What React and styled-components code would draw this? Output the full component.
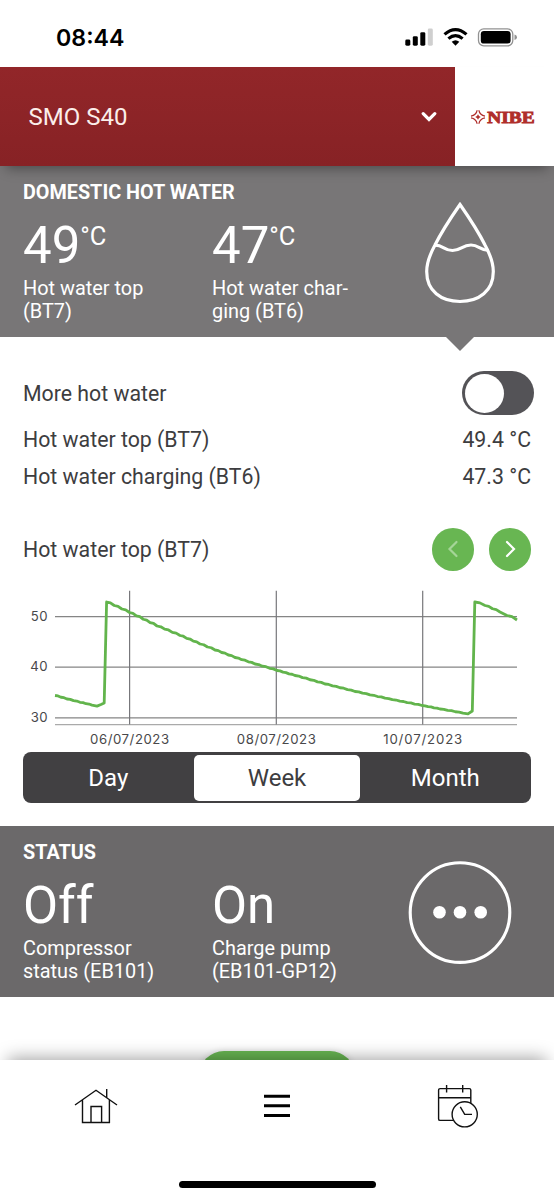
import { useState } from "react";
import styled, { createGlobalStyle } from "styled-components";

const GlobalStyle = createGlobalStyle`
    * { box-sizing: border-box; }
    body {
        margin: 0;
        background: #fff;
        font-family: Roboto, "Liberation Sans", sans-serif;
        color: #3d3d3f;
    }
    button { font-family: inherit; }
`;

const Screen = styled.div`
    width: 554px;
    height: 1200px;
    display: flex;
    flex-direction: column;
    background: #fff;
    overflow: hidden;
`;

const StatusBar = styled.div`
    height: 67px;
    flex-shrink: 0;
    display: flex;
    align-items: center;
    justify-content: space-between;
    padding: 8px 37px 0 56px;
    .time {
        font-family: Inter, "Liberation Sans", sans-serif;
        font-size: 23.2px;
        font-weight: 600;
        line-height: 30px;
        color: #000;
    }
    svg { display: block; }
`;

const Header = styled.div`
    height: 99px;
    flex-shrink: 0;
    display: flex;
    position: relative;
    z-index: 1;
    box-shadow: 0 8px 12px -6px rgba(0, 0, 0, 0.4);
`;

const SystemPicker = styled.button`
    width: 454.5px;
    display: flex;
    align-items: center;
    justify-content: space-between;
    border: none;
    padding: 0 18px 0 28.5px;
    background: linear-gradient(to bottom, #922629, #872225);
    color: #fbeeea;
    font-size: 24px;
    cursor: pointer;
`;

const Brand = styled.div`
    flex: 1;
    display: flex;
    align-items: center;
    padding-left: 15px;
    background: #fff;
`;

const Card = styled.div`
    height: 171px;
    flex-shrink: 0;
    position: relative;
    padding: 14.6px 34px 0 23px;
    display: grid;
    grid-template-columns: 377px 120px;
    background: ${(props) => (props.$open ? "#787677" : "#6b696a")};
    color: #fff;
    &::after {
        content: "";
        display: ${(props) => (props.$open ? "block" : "none")};
        position: absolute;
        top: 100%;
        left: 446px;
        border: 14.5px solid transparent;
        border-top: 14px solid #787677;
        border-bottom: none;
    }
`;

const CardTitle = styled.h2`
    margin: 0 0 16px;
    font-size: 19.8px;
    font-weight: 700;
    line-height: 24px;
`;

const Values = styled.div`
    display: grid;
    grid-template-columns: 189px 188px;
`;

const Value = styled.div`
    display: flex;
    align-items: flex-start;
    height: 50px;
    font-size: 51px;
    line-height: 50px;
    sup {
        font-size: 25.5px;
        line-height: 30px;
    }
`;

const ValueLabel = styled.div`
    margin-top: 6px;
    font-size: 19.9px;
    line-height: 23.4px;
    white-space: pre-line;
`;

const CardIcon = styled.div`
    display: flex;
    justify-content: center;
    padding-top: 19px;
`;

const Details = styled.div`
    flex-shrink: 0;
    height: 489px;
    padding: 34px 23px 0 23px;
    font-size: 21.3px;
`;

const Row = styled.div`
    display: flex;
    align-items: center;
    justify-content: space-between;
    height: 36.8px;
`;

const SwitchRow = styled(Row)`
    height: 44px;
    margin: 0 -3px 6px 0;
`;

const Switch = styled.button`
    width: 72px;
    height: 44px;
    padding: 0 2.5px;
    display: flex;
    align-items: center;
    justify-content: ${(props) => (props.$on ? "flex-end" : "flex-start")};
    border: none;
    border-radius: 22px;
    background: ${(props) => (props.$on ? "#68b652" : "#545357")};
    cursor: pointer;
    span {
        width: 39px;
        height: 39px;
        border-radius: 50%;
        background: #fff;
    }
`;

const ChartHeader = styled(Row)`
    height: 43px;
    margin-top: 33.4px;
`;

const Arrows = styled.div`
    display: flex;
    gap: 14.5px;
`;

const RoundButton = styled.button`
    width: 42.5px;
    height: 42.5px;
    padding: 0;
    display: flex;
    align-items: center;
    justify-content: center;
    border: none;
    border-radius: 50%;
    background: #68b652;
    color: #fff;
    cursor: pointer;
    &:disabled { color: #a5d598; }
`;

const ChartSvg = styled.svg`
    display: block;
    margin-left: -23px;
    text {
        font-family: Inter, "Liberation Sans", sans-serif;
        font-size: 13.2px;
        fill: #48484a;
    }
`;

const Tabs = styled.div`
    height: 51px;
    padding: 2.5px;
    display: grid;
    grid-template-columns: 168.5px 166px 1fr;
    border-radius: 8px;
    background: #414042;
`;

const Tab = styled.button`
    border: none;
    border-radius: 5px;
    padding: 0;
    font-size: 24px;
    background: ${(props) => (props.$active ? "#fff" : "transparent")};
    color: ${(props) => (props.$active ? "#3d3d3f" : "#fff")};
    cursor: pointer;
    &:first-child { padding-right: 3px; }
    &:last-child { padding-left: 2px; }
`;

const Actions = styled.div`
    flex: 1;
    min-height: 0;
    display: flex;
    justify-content: center;
    padding-top: 54px;
`;

const GreenButton = styled.button`
    width: 156px;
    height: 50px;
    flex-shrink: 0;
    border: none;
    border-radius: 25px;
    background: #68b652;
    box-shadow: 0 0 6px rgba(0, 0, 0, 0.15);
`;

const BottomNav = styled.nav`
    height: 140px;
    flex-shrink: 0;
    position: relative;
    display: flex;
    flex-direction: column;
    align-items: center;
    justify-content: space-between;
    padding: 21px 6px 12px;
    background: #fff;
    box-shadow: 0 -10px 16px -8px rgba(0, 0, 0, 0.36);
`;

const NavItems = styled.div`
    width: 100%;
    display: grid;
    grid-template-columns: repeat(3, 1fr);
    justify-items: center;
    svg { overflow: visible; }
`;

const HomeIndicator = styled.div`
    width: 197px;
    height: 7px;
    border-radius: 4px;
    background: #000;
`;

const TREND = [
    [55, 124], [67, 127.5], [80, 130.8], [92, 133.6], [97, 134.6], [101, 133],
    [104.2, 131.5], [106.6, 30.5], [129.5, 41], [157, 54.5], [180, 64],
    [200, 72.5], [215, 78.5], [235, 86], [255, 92.5], [277, 99], [295, 104],
    [325, 112.5], [355, 120], [385, 126.7], [422, 134], [440, 137.5],
    [463, 141.6], [468, 142.4], [472.3, 139.5], [474.8, 30.5], [485, 34],
    [500, 40.5], [507, 44], [517, 48.5],
];

const buildTrend = () => {
    const out = [];
    TREND.forEach(([x, y], i) => {
        const next = TREND[i + 1];
        out.push(`${x},${y}`);
        if (!next || next[0] - x < 9) return;
        const steps = Math.round((next[0] - x) / 7);
        const dx = (next[0] - x) / steps;
        const dy = (next[1] - y) / steps;
        for (let s = 0; s < steps; s++) {
            out.push(`${x + dx * (s + 0.5)},${y + dy * (s + 0.25)}`);
            if (s < steps - 1) out.push(`${x + dx * (s + 1)},${y + dy * (s + 1)}`);
        }
    });
    return out.join(" ");
};

const Chart = () => (
    <ChartSvg width="554" height="181.5" viewBox="0 0 554 181.5">
        {[[50, 45.6], [40, 96.2], [30, 146.8]].map(([label, y]) => (
            <g key={label}>
                <line x1="55" x2="517" y1={y} y2={y} stroke="#858585" strokeWidth="1.2" />
                <text x="47.8" y={y + 4.2} textAnchor="end" letterSpacing="0.3">{label}</text>
            </g>
        ))}
        <line x1="55" x2="517" y1="153.6" y2="153.6" stroke="#aaa" strokeWidth="1.3" />
        {[["06/07/2023", 129.6], ["08/07/2023", 276.3], ["10/07/2023", 422.7]].map(([label, x]) => (
            <g key={label}>
                <line x1={x} x2={x} y1="19.8" y2="153.6" stroke="#77777b" strokeWidth="1.2" />
                <text x={x} y="172.9" textAnchor="middle" textLength="79">{label}</text>
            </g>
        ))}
        <polyline
            points={buildTrend()}
            transform="translate(0 0.5)"
            fill="none"
            stroke="#62b44c"
            strokeWidth="2.8"
            strokeLinejoin="round"
        />
    </ChartSvg>
);

const StatusIcons = () => (
    <svg width="112" height="20" viewBox="0 0 112 20">
        <rect x="0.3" y="11.5" width="5" height="6.2" rx="1.4" />
        <rect x="7.8" y="8.2" width="5" height="9.5" rx="1.4" />
        <rect x="15.3" y="4.2" width="5" height="13.5" rx="1.4" />
        <rect x="22.8" y="0.5" width="5" height="17.2" rx="1.4" fill="#cfcfcf" />
        <g fill="none" stroke="#000" strokeWidth="3.2">
            <path d="M39.5 6.4Q50.5 -3 61.5 6.4" />
            <path d="M43.4 10.6Q50.5 4.6 57.6 10.6" />
        </g>
        <path d="M46.7 13.8Q50.5 10.6 54.3 13.8L50.5 17.7Z" />
        <rect x="73.5" y="0.8" width="34.3" height="17" rx="5.3" fill="none" stroke="#929292" strokeWidth="1.3" />
        <rect x="75.8" y="3" width="29.8" height="12.6" rx="3.2" />
        <path d="M109.5 6.5Q112 7.2 112 9.3T109.5 12.1Z" fill="#929292" />
    </svg>
);

const NibeLogo = () => (
    <svg width="68" height="18" viewBox="0 0 68 18">
        <g fill="none" stroke="#b02e2b" strokeWidth="1.3">
            <path d="M7.1 2.2Q6.8 4.8 5 6.3Q3.6 7.8 1 8.2" />
            <path d="M8.9 2.2Q9.2 4.8 11 6.3Q12.4 7.8 15 8.2" />
            <path d="M7.1 15.8Q6.8 13.2 5 11.7Q3.6 10.2 1 9.8" />
            <path d="M8.9 15.8Q9.2 13.2 11 11.7Q12.4 10.2 15 9.8" />
        </g>
        <path d="M8 6.2L9 8L10.8 9L9 10L8 11.8L7 10L5.2 9L7 8Z" fill="#b02e2b" />
        <text
            x="17.2"
            y="14.8"
            textLength="47.5"
            lengthAdjust="spacingAndGlyphs"
            fontFamily="'Liberation Serif', serif"
            fontWeight="700"
            fontSize="17.5"
            fill="#b02e2b"
            stroke="#b02e2b"
            strokeWidth="0.9"
        >
            NIBE
        </text>
    </svg>
);

const DropIcon = () => (
    <svg width="76" height="106" viewBox="0 0 76 106" fill="none" stroke="#fff" strokeWidth="3.2">
        <path d="M38 4.5C30 16 18 35 13 45C7 56 4.7 64 4.7 71.5C4.7 91 19 101.5 38 101.5C57 101.5 71.3 91 71.3 71.5C71.3 64 69 56 63 45C58 35 46 16 38 4.5Z" />
        <path d="M12 45.2C21 44.5 22 50.5 30.5 50.5C39 50.5 40 45 49 45C57 45 58 50.5 67 50.5" />
    </svg>
);

const MoreIcon = () => (
    <svg width="104" height="106" viewBox="0 0 104 106">
        <circle cx="52" cy="52.6" r="49.8" fill="none" stroke="#fff" strokeWidth="3.1" />
        <circle cx="31.5" cy="52.3" r="6.3" fill="#fff" />
        <circle cx="52" cy="52.3" r="6.3" fill="#fff" />
        <circle cx="72.7" cy="52.3" r="6.3" fill="#fff" />
    </svg>
);

const Chevron = ({ left }) => (
    <svg width="14" height="20" viewBox="0 0 14 20" fill="none" stroke="currentColor" strokeWidth="2.2" strokeLinecap="round">
        <path d={left ? "M10.5 3L3.5 10L10.5 17" : "M4 3L11 10L4 17"} />
    </svg>
);

const HomeIcon = () => (
    <svg width="46" height="46" viewBox="0 0 46 46" fill="none" stroke="#111" strokeWidth="1.4">
        <path d="M2 24L23 9.3L44 24M9.5 19V41.5H36.4V19M18 41.5V25.5H28.6V41.5M33.7 8V16.6" />
    </svg>
);

const MenuIcon = () => (
    <svg width="46" height="46" viewBox="0 0 46 46" stroke="#000" strokeWidth="3">
        <path d="M10 15.2H36M10 24.8H36M10 34.4H36" />
    </svg>
);

const ScheduleIcon = () => (
    <svg width="46" height="46" viewBox="0 0 46 46" fill="none" stroke="#111" strokeWidth="1.4">
        <rect x="3.6" y="7.6" width="32.2" height="31.8" rx="1.5" />
        <path d="M3.6 16.8H35.8M11.6 4V11.4M27.7 4V11.4" />
        <circle cx="29.7" cy="33.3" r="12.6" fill="#fff" />
        <path d="M25.3 25.8L29.7 33.4H37" />
    </svg>
);

const PERIODS = ["Day", "Week", "Month"];

const App = () => {
    const [moreWater, setMoreWater] = useState(false);
    const [period, setPeriod] = useState("Week");

    return (
        <>
            <GlobalStyle />
            <Screen>
                <StatusBar>
                    <span className="time">08:44</span>
                    <StatusIcons />
                </StatusBar>
                <Header>
                    <SystemPicker>
                        SMO S40
                        <svg width="16" height="12" viewBox="0 0 16 12" fill="none" stroke="#fff" strokeWidth="3.2" strokeLinecap="round">
                            <path d="M2.2 2.6L8 8.4L13.8 2.6" />
                        </svg>
                    </SystemPicker>
                    <Brand>
                        <NibeLogo />
                    </Brand>
                </Header>
                <Card $open>
                    <div>
                        <CardTitle>DOMESTIC HOT WATER</CardTitle>
                        <Values>
                            <div>
                                <Value>49<sup>°C</sup></Value>
                                <ValueLabel>{"Hot water top\n(BT7)"}</ValueLabel>
                            </div>
                            <div>
                                <Value>47<sup>°C</sup></Value>
                                <ValueLabel>{"Hot water char-\nging (BT6)"}</ValueLabel>
                            </div>
                        </Values>
                    </div>
                    <CardIcon>
                        <DropIcon />
                    </CardIcon>
                </Card>
                <Details>
                    <SwitchRow>
                        <span>More hot water</span>
                        <Switch $on={moreWater} onClick={() => setMoreWater(!moreWater)}>
                            <span />
                        </Switch>
                    </SwitchRow>
                    <Row>
                        <span>Hot water top (BT7)</span>
                        <span>49.4 °C</span>
                    </Row>
                    <Row>
                        <span>Hot water charging (BT6)</span>
                        <span>47.3 °C</span>
                    </Row>
                    <ChartHeader>
                        <span>Hot water top (BT7)</span>
                        <Arrows>
                            <RoundButton disabled><Chevron left /></RoundButton>
                            <RoundButton><Chevron /></RoundButton>
                        </Arrows>
                    </ChartHeader>
                    <Chart />
                    <Tabs>
                        {PERIODS.map((name) => (
                            <Tab key={name} $active={name === period} onClick={() => setPeriod(name)}>
                                {name}
                            </Tab>
                        ))}
                    </Tabs>
                </Details>
                <Card>
                    <div>
                        <CardTitle>STATUS</CardTitle>
                        <Values>
                            <div>
                                <Value>Off</Value>
                                <ValueLabel>{"Compressor\nstatus (EB101)"}</ValueLabel>
                            </div>
                            <div>
                                <Value>On</Value>
                                <ValueLabel>{"Charge pump\n(EB101-GP12)"}</ValueLabel>
                            </div>
                        </Values>
                    </div>
                    <CardIcon>
                        <MoreIcon />
                    </CardIcon>
                </Card>
                <Actions>
                    <GreenButton />
                </Actions>
                <BottomNav>
                    <NavItems>
                        <HomeIcon />
                        <MenuIcon />
                        <ScheduleIcon />
                    </NavItems>
                    <HomeIndicator />
                </BottomNav>
            </Screen>
        </>
    );
};

export default App;
